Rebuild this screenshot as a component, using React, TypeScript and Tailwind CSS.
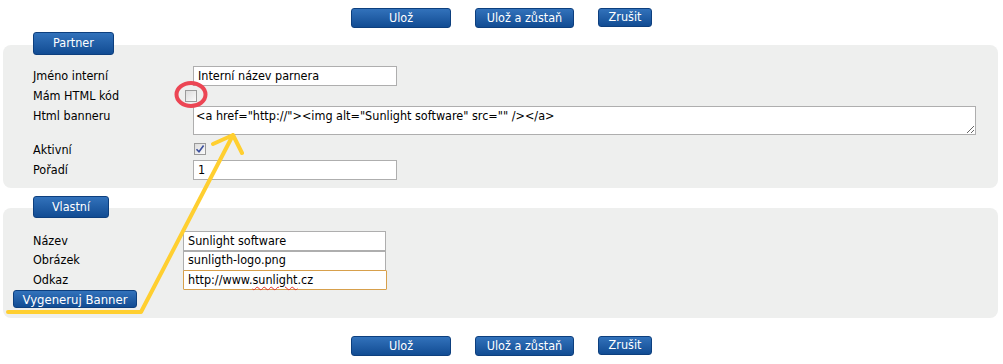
import React from "react"

const font = { fontFamily: '"DejaVu Sans Condensed", "DejaVu Sans", Tahoma, sans-serif' }

function BlueButton({ label, className }: { label: string; className: string }) {
  return (
    <button
      className={`flex items-center justify-center rounded-[3px] border border-[#0d3f7e] bg-gradient-to-b from-[#3272bb] to-[#114c93] text-[12.5px] leading-none text-white ${className}`}
    >
      {label}
    </button>
  )
}

function ActionBar() {
  return (
    <div className="flex justify-center gap-6">
      <BlueButton label="Ulož" className="h-[20px] w-[100px]" />
      <BlueButton label="Ulož a zůstaň" className="h-[20px] w-[99px]" />
      <BlueButton label="Zrušit" className="h-[19px] w-[54px]" />
    </div>
  )
}

function Tab({ label, width, height }: { label: string; width: string; height: string }) {
  return (
    <div className={`relative z-10 ml-[33px] ${width}`}>
      <BlueButton label={label} className={`${height} w-full rounded-[2px]`} />
    </div>
  )
}

function TextBox({ value, className = "" }: { value: string; className?: string }) {
  return (
    <div
      className={`flex h-[20px] shrink-0 items-center border border-[#aeaeae] bg-white px-[4px] text-[12.5px] text-black ${className}`}
    >
      {value}
    </div>
  )
}

function Check({ checked }: { checked?: boolean }) {
  return (
    <span className="flex h-[12px] w-[12px] items-center justify-center border border-[#9a9a9a] bg-gradient-to-br from-[#dcdcdc] to-[#fbfbfb]">
      {checked && (
        <svg width="10" height="10" viewBox="0 0 10 10">
          <path d="M1.5 5.2 L4 7.8 L8.6 1.6" fill="none" stroke="#3b4f9c" strokeWidth="1.6" />
        </svg>
      )}
    </span>
  )
}

function Label({ children, width = "w-[190px]" }: { children: React.ReactNode; width?: string }) {
  return <div className={`${width} shrink-0 pl-[30px] text-[12.5px] text-black`}>{children}</div>
}

export default function App() {
  return (
    <div className="relative h-[364px] w-[1003px] overflow-hidden bg-white pt-[8px]" style={font}>
      <ActionBar />

      <div className="mt-[4px]">
        <Tab label="Partner" width="w-[81px]" height="h-[23px]" />
        <div className="ml-[3px] mr-[5px] -mt-[10px] rounded-[8px] bg-[#eeefee] pb-[8px] pt-[21px]">
          <div className="flex h-[20px] items-center">
            <Label>Jméno interní</Label>
            <TextBox value="Interní název parnera" className="w-[204px]" />
          </div>
          <div className="flex h-[20px] items-center">
            <Label>Mám HTML kód</Label>
            <span className="-ml-[8px]">
              <Check />
            </span>
          </div>
          <div className="flex h-[29px] items-start">
            <Label>
              <div className="pt-[1px]">Html banneru</div>
            </Label>
            <textarea
              readOnly
              value={'<a href="http://"><img alt="Sunlight software" src="" /></a>'}
              className="h-[29px] w-[783px] border border-[#aeaeae] bg-white px-[2px] py-[1px] text-[12.5px] leading-[15px] text-black outline-none"
              style={font}
            />
          </div>
          <div className="mt-[7px] flex h-[14px] items-center">
            <Label>
              <div className="pt-[3px]">Aktivní</div>
            </Label>
            <span className="ml-[1px]">
              <Check checked />
            </span>
          </div>
          <div className="mt-[4px] flex h-[20px] items-center">
            <Label>Pořadí</Label>
            <TextBox value="1" className="w-[204px]" />
          </div>
        </div>
      </div>

      <div className="mt-[8px]">
        <Tab label="Vlastní" width="w-[76px]" height="h-[22px]" />
        <div className="ml-[3px] mr-[5px] -mt-[10px] rounded-[8px] bg-[#eeefee] pb-[10px] pt-[23px]">
          <div className="flex h-[20px] items-center">
            <Label width="w-[180px]">Název</Label>
            <TextBox value="Sunlight software" className="w-[203px]" />
          </div>
          <div className="flex h-[19px] items-center">
            <Label width="w-[180px]">Obrázek</Label>
            <TextBox value="sunligth-logo.png" className="w-[203px]" />
          </div>
          <div className="flex h-[20px] items-center">
            <Label width="w-[180px]">Odkaz</Label>
            <div className="flex h-[20px] w-[204px] shrink-0 items-center rounded-[1px] border border-[#d7a04c] bg-white px-[4px] text-[12.5px] text-black">
              http://www.
              <span className="underline decoration-[#e03030] decoration-wavy decoration-1 underline-offset-2">
                sunlight
              </span>
              .cz
            </div>
          </div>
          <div className="ml-[10px]">
            <BlueButton label="Vygeneruj Banner" className="h-[18px] w-[124px] rounded-[2px] text-[13px]" />
          </div>
        </div>
      </div>

      <div className="mt-[18px]">
        <ActionBar />
      </div>

      <svg className="pointer-events-none absolute left-0 top-0" width="1003" height="364">
        <ellipse cx="191" cy="94.5" rx="14.5" ry="11.5" fill="none" stroke="#ec4654" strokeWidth="4" />
        <path
          d="M8 312 L141 312 L233 135 M213 144 L233 135 L242 153"
          fill="none"
          stroke="#ffcf30"
          strokeWidth="4"
          strokeLinecap="round"
          strokeLinejoin="round"
        />
      </svg>
    </div>
  )
}
